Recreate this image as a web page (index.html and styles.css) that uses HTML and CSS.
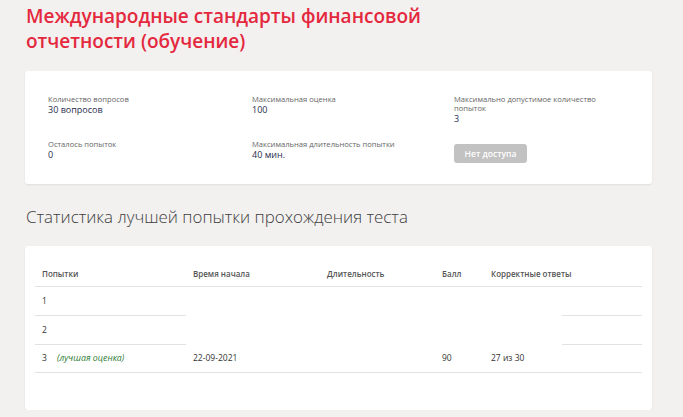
FILE: index.html
```html
<!DOCTYPE html>
<html>
	<head>
		<meta charset="UTF-8">
		<title>Тест</title>
		<link rel="stylesheet" href="styles.css">
	</head>
	<body>
		<div class="page">
			<h1 class="title">Международные стандарты финансовой отчетности (обучение)</h1>

			<div class="card info">
				<div class="item">
					<div class="label">Количество вопросов</div>
					<div class="value">30 вопросов</div>
				</div>
				<div class="item">
					<div class="label">Максимальная оценка</div>
					<div class="value">100</div>
				</div>
				<div class="item">
					<div class="label">Максимально допустимое количество попыток</div>
					<div class="value">3</div>
				</div>
				<div class="item">
					<div class="label">Осталось попыток</div>
					<div class="value">0</div>
				</div>
				<div class="item">
					<div class="label">Максимальная длительность попытки</div>
					<div class="value">40 мин.</div>
				</div>
				<div class="item">
					<button class="btn-disabled" disabled>Нет доступа</button>
				</div>
			</div>

			<h2 class="subtitle">Статистика лучшей попытки прохождения теста</h2>

			<div class="card stats">
				<table class="attempts">
					<tr>
						<th class="c1">Попытки</th>
						<th class="c2">Время начала</th>
						<th class="c3">Длительность</th>
						<th class="c4">Балл</th>
						<th class="c5" colspan="2">Корректные ответы</th>
					</tr>
					<tr class="empty">
						<td class="line">1</td>
						<td></td><td></td><td></td><td></td>
						<td class="line c6"></td>
					</tr>
					<tr class="empty">
						<td class="line">2</td>
						<td></td><td></td><td></td><td></td>
						<td class="line c6"></td>
					</tr>
					<tr class="best">
						<td>3 <span class="mark">(лучшая оценка)</span></td>
						<td>22-09-2021</td>
						<td></td>
						<td>90</td>
						<td>27 из 30</td>
						<td></td>
					</tr>
				</table>
			</div>
		</div>
	</body>
</html>
```

FILE: styles.css
```css
*{
	margin:0;
	padding:0;
	box-sizing:border-box;
}
body{
	background:#f2f1f0;
	font-family:"Open Sans", "Noto Sans", sans-serif;
	color:#333;
}
div.page{
	width:627px;
	margin-left:25px;
	padding-top:4px;
}
h1.title{
	font-size:19px;
	font-weight:600;
	line-height:25px;
	color:#e4283e;
	width:420px;
	padding-left:1px;
}
div.card{
	background:#fff;
	border-radius:3px;
	box-shadow:0 1px 2px rgba(0,0,0,0.08);
}
div.info{
	margin-top:17px;
	height:113px;
	padding:24px 23px 0 23px;
	display:grid;
	grid-template-columns:204px 202px 160px;
	grid-template-rows:45px 40px;
}
div.info .label{
	font-size:7.6px;
	line-height:9px;
	color:#666;
}
div.info .value{
	font-size:9px;
	line-height:11px;
	font-weight:500;
	color:#1f2d4d;
}
button.btn-disabled{
	margin-top:-1px;
	width:73px;
	height:19px;
	border:none;
	border-radius:3px;
	background:#c2c2c2;
	color:#fff;
	font-family:"Open Sans", sans-serif;
	font-weight:600;
	font-size:8.5px;
}
h2.subtitle{
	margin-top:23px;
	font-size:16.9px;
	font-weight:300;
	line-height:20px;
	color:#3e3e3e;
	padding-left:1px;
}
div.stats{
	margin-top:19px;
	height:164px;
	padding:16px 10px 0 10px;
}
table.attempts{
	width:607px;
	border-collapse:collapse;
	font-size:8.5px;
	color:#333;
}
table.attempts th{
	text-align:left;
	font-weight:600;
	font-size:8px;
	color:#555;
	height:24px;
	padding-left:7px;
	border-bottom:1px solid #e2e2e2;
}
table.attempts td{
	height:29px;
	padding-left:7px;
}
table.attempts tr.best td{
	height:28px;
}
table.attempts .c1{width:151px;}
table.attempts .c2{width:134px;}
table.attempts .c3{width:115px;}
table.attempts .c4{width:49px;}
td.line{
	border-bottom:1px solid #e2e2e2;
}
td.c6{
	width:80px;
}
tr.best td{
	border-bottom:1px solid #e2e2e2;
}
span.mark{
	font-style:italic;
	color:#2e7d32;
	margin-left:8px;
	font-size:8.8px;
}
```
